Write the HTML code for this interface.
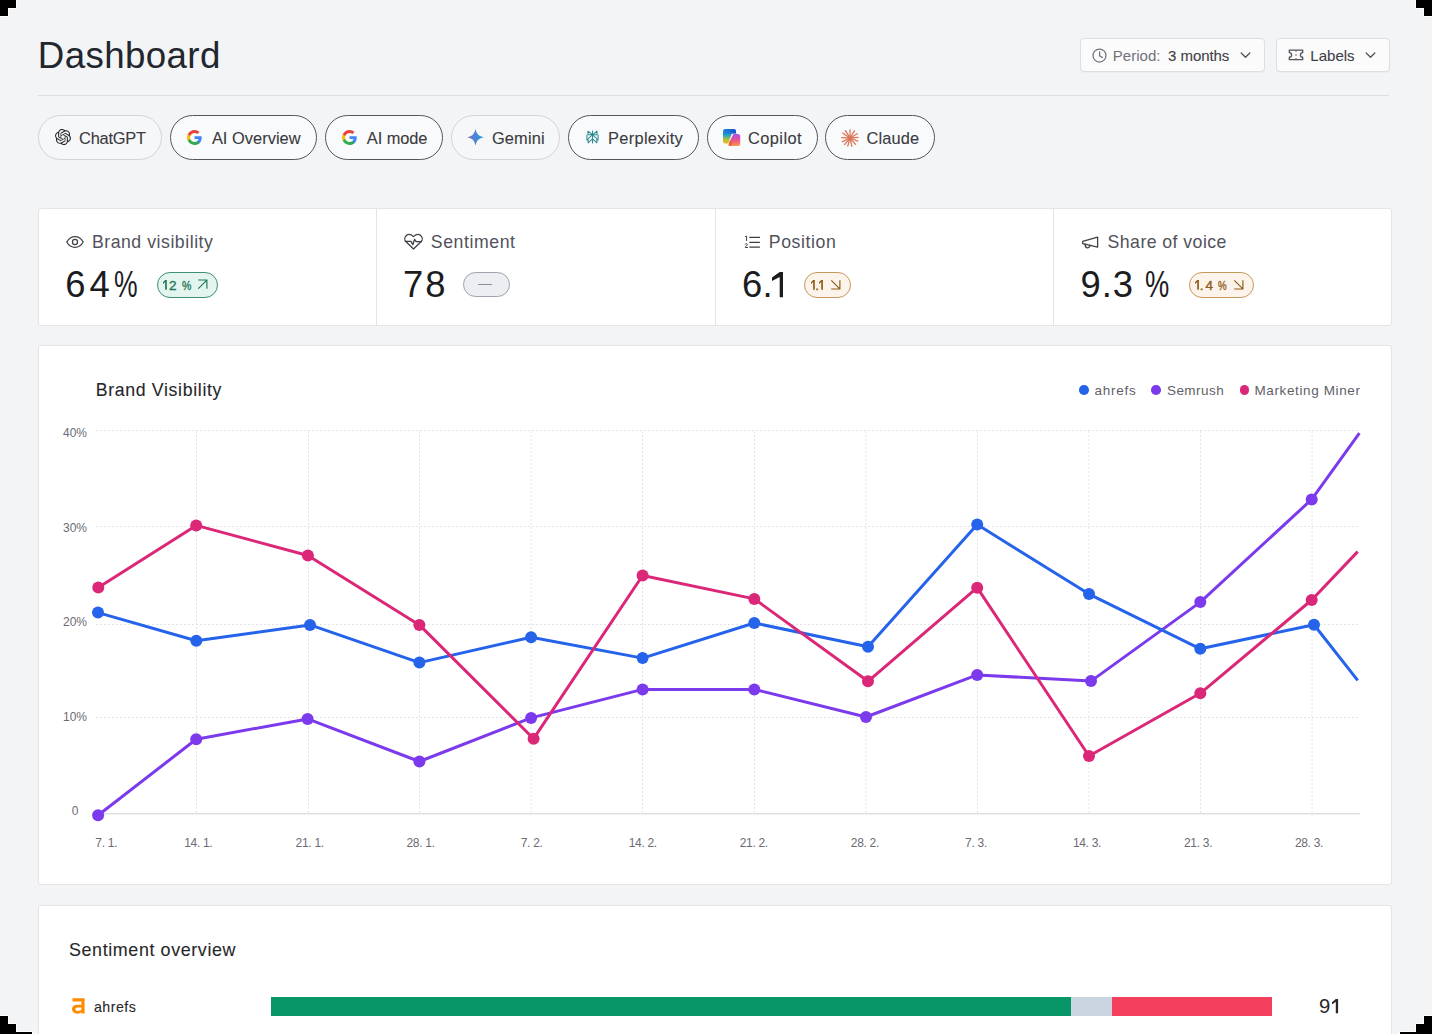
<!DOCTYPE html>
<html><head><meta charset="utf-8">
<style>
*{box-sizing:border-box;margin:0;padding:0}
html,body{width:1432px;height:1034px;overflow:hidden;background:#f3f4f6;font-family:"Liberation Sans",sans-serif;color:#27272a}
.abs{position:absolute}
.t{position:absolute;white-space:nowrap;line-height:1}
.med{-webkit-text-stroke:0.1px currentColor}
.bdg{-webkit-text-stroke:0.35px currentColor}
.corner{position:absolute;background:#000}
.card{position:absolute;background:#fff;border:1px solid #e4e4e7;border-radius:4px}
.chip{position:absolute;top:115px;height:44.5px;border-radius:23px;border:1px solid #d4d4d8;background:#f6f7f8}
.chip.sel{border:1.5px solid #55555c;background:#f9fafb}
.btn{position:absolute;top:38px;height:34px;background:#fbfbfc;border:1px solid #dddee2;border-radius:4px;box-shadow:0 1px 1px rgba(0,0,0,0.03)}
</style></head>
<body>
<div class="t" style="left:37.8px;top:37.8px;font-size:36.7px;letter-spacing:0.38px;color:#22262d">Dashboard</div>
<div class="abs" style="left:38px;top:95px;width:1351px;height:1px;background:#dcdee2"></div>

<div class="btn" style="left:1080px;width:184.5px"></div>
<svg class="abs" style="left:1092px;top:47.5px" width="15" height="15" viewBox="0 0 15 15"><circle cx="7.5" cy="7.5" r="6.5" fill="none" stroke="#71717a" stroke-width="1.25"/><path d="M7.6 3.9V7.9l2.9 1.6" fill="none" stroke="#71717a" stroke-width="1.25" stroke-linecap="round" stroke-linejoin="round"/></svg>
<div class="t" style="left:1112.8px;top:47.9px;font-size:15px;letter-spacing:0.03px;color:#71717a">Period:</div>
<div class="t med" style="left:1168.1px;top:47.9px;font-size:15px;letter-spacing:-0.06px;color:#3f3f46">3 months</div>
<svg class="abs" style="left:1239px;top:50px" width="13" height="10" viewBox="0 0 13 10"><path d="M2.2 3l4.3 4.3L10.8 3" fill="none" stroke="#52525b" stroke-width="1.3" stroke-linecap="round" stroke-linejoin="round"/></svg>

<div class="btn" style="left:1276px;width:113.5px"></div>
<svg class="abs" style="left:1287.5px;top:49px" width="16" height="12" viewBox="0 0 16 12"><path d="M1.3 1.2H14.7V3.6A2.3 2.3 0 0 0 14.7 8.2V10.7H1.3V8.2A2.3 2.3 0 0 0 1.3 3.6Z" fill="none" stroke="#52525b" stroke-width="1.3" stroke-linejoin="round"/><path d="M8 1.5v1.3M8 5.2v1.4M8 9.2v1.3" stroke="#52525b" stroke-width="1.2"/></svg>
<div class="t med" style="left:1310.3px;top:47.9px;font-size:15px;letter-spacing:0.02px;color:#3f3f46">Labels</div>
<svg class="abs" style="left:1364px;top:50px" width="13" height="10" viewBox="0 0 13 10"><path d="M2.2 3l4.3 4.3L10.8 3" fill="none" stroke="#52525b" stroke-width="1.3" stroke-linecap="round" stroke-linejoin="round"/></svg>

<div class="chip" style="left:38px;width:124px"></div>
<div class="chip sel" style="left:170px;width:147px"></div>
<div class="chip sel" style="left:325px;width:118px"></div>
<div class="chip" style="left:451px;width:108.5px"></div>
<div class="chip sel" style="left:567.5px;width:131.5px"></div>
<div class="chip sel" style="left:707px;width:110.5px"></div>
<div class="chip sel" style="left:825px;width:110px"></div>

<div class="t med" style="left:79.1px;top:129.8px;font-size:16.4px;letter-spacing:-0.25px;color:#3a3a40">ChatGPT</div>
<div class="t med" style="left:211.9px;top:129.8px;font-size:16.4px;letter-spacing:0.03px;color:#3a3a40">AI Overview</div>
<div class="t med" style="left:366.8px;top:129.8px;font-size:16.4px;letter-spacing:-0.07px;color:#3a3a40">AI mode</div>
<div class="t med" style="left:492px;top:129.8px;font-size:16.4px;letter-spacing:0.12px;color:#3a3a40">Gemini</div>
<div class="t med" style="left:608.1px;top:129.8px;font-size:16.4px;letter-spacing:0.29px;color:#3a3a40">Perplexity</div>
<div class="t med" style="left:748px;top:129.8px;font-size:16.4px;letter-spacing:0.42px;color:#3a3a40">Copilot</div>
<div class="t med" style="left:866.4px;top:129.8px;font-size:16.4px;letter-spacing:0.18px;color:#3a3a40">Claude</div>

<!-- ChatGPT logo -->
<svg class="abs" style="left:54.5px;top:129px" width="16" height="16" viewBox="0 0 24 24"><path fill="#27272a" d="M22.2819 9.8211a5.9847 5.9847 0 0 0-.5157-4.9108 6.0462 6.0462 0 0 0-6.5098-2.9A6.0651 6.0651 0 0 0 4.9807 4.1818a5.9847 5.9847 0 0 0-3.9977 2.9 6.0462 6.0462 0 0 0 .7427 7.0966 5.98 5.98 0 0 0 .511 4.9107 6.051 6.051 0 0 0 6.5146 2.9001A5.9847 5.9847 0 0 0 13.2599 24a6.0557 6.0557 0 0 0 5.7718-4.2058 5.9894 5.9894 0 0 0 3.9977-2.9001 6.0557 6.0557 0 0 0-.7475-7.0729zm-9.022 12.6081a4.4755 4.4755 0 0 1-2.8764-1.0408l.1419-.0804 4.7783-2.7582a.7948.7948 0 0 0 .3927-.6813v-6.7369l2.02 1.1686a.071.071 0 0 1 .038.052v5.5826a4.504 4.504 0 0 1-4.4945 4.4944zm-9.6607-4.1254a4.4708 4.4708 0 0 1-.5346-3.0137l.142.0852 4.783 2.7582a.7712.7712 0 0 0 .7806 0l5.8428-3.3685v2.3324a.0804.0804 0 0 1-.0332.0615L9.74 19.9502a4.4992 4.4992 0 0 1-6.1408-1.6464zM2.3408 7.8956a4.485 4.485 0 0 1 2.3655-1.9728V11.6a.7664.7664 0 0 0 .3879.6765l5.8144 3.3543-2.0201 1.1685a.0757.0757 0 0 1-.071 0l-4.8303-2.7865A4.504 4.504 0 0 1 2.3408 7.872zm16.5963 3.8558L13.1038 8.364 15.1192 7.2a.0757.0757 0 0 1 .071 0l4.8303 2.7913a4.4944 4.4944 0 0 1-.6765 8.1042v-5.6772a.79.79 0 0 0-.407-.667zm2.0107-3.0231l-.142-.0852-4.7735-2.7818a.7759.7759 0 0 0-.7854 0L9.409 9.2297V6.8974a.0662.0662 0 0 1 .0284-.0615l4.8303-2.7866a4.4992 4.4992 0 0 1 6.6802 4.66zM8.3065 12.863l-2.02-1.1638a.0804.0804 0 0 1-.038-.0567V6.0742a4.4992 4.4992 0 0 1 7.3757-3.4537l-.142.0805L8.704 5.459a.7948.7948 0 0 0-.3927.6813zm1.0976-2.3654l2.602-1.4998 2.6069 1.4998v2.9994l-2.5974 1.4997-2.6067-1.4997Z"/></svg>

<!-- Google G x2 -->
<svg class="abs" style="left:186.7px;top:129.6px" width="15" height="15" viewBox="1 1 22 22"><path fill="#4285F4" d="M22.56 12.25c0-.78-.07-1.53-.2-2.25H12v4.26h5.92c-.26 1.37-1.04 2.53-2.21 3.31v2.77h3.57c2.08-1.92 3.28-4.74 3.28-8.09z"/><path fill="#34A853" d="M12 23c2.97 0 5.46-.98 7.28-2.66l-3.57-2.77c-.98.66-2.23 1.06-3.71 1.06-2.86 0-5.290-1.93-6.160-4.53H2.18v2.84C3.99 20.53 7.7 23 12 23z"/><path fill="#FBBC05" d="M5.84 14.09c-.22-.66-.35-1.36-.35-2.09s.13-1.43.35-2.09V7.07H2.18C1.43 8.55 1 10.22 1 12s.43 3.45 1.18 4.93l2.85-2.22.81-.62z"/><path fill="#EA4335" d="M12 5.38c1.62 0 3.06.56 4.21 1.64l3.15-3.15C17.45 2.09 14.97 1 12 1 7.7 1 3.99 3.47 2.18 7.07l3.66 2.84c.87-2.6 3.3-4.53 6.16-4.53z"/></svg>
<svg class="abs" style="left:341.7px;top:129.6px" width="15" height="15" viewBox="1 1 22 22"><path fill="#4285F4" d="M22.56 12.25c0-.78-.07-1.53-.2-2.25H12v4.26h5.920c-.26 1.37-1.04 2.53-2.21 3.31v2.77h3.57c2.08-1.92 3.28-4.74 3.28-8.09z"/><path fill="#34A853" d="M12 23c2.97 0 5.46-.98 7.28-2.66l-3.57-2.77c-.98.66-2.23 1.06-3.71 1.06-2.86 0-5.29-1.93-6.16-4.53H2.18v2.84C3.99 20.53 7.7 23 12 23z"/><path fill="#FBBC05" d="M5.84 14.09c-.22-.66-.35-1.36-.35-2.09s.13-1.43.35-2.09V7.07H2.18C1.43 8.55 1 10.22 1 12s.43 3.45 1.18 4.93l2.85-2.22.81-.62z"/><path fill="#EA4335" d="M12 5.38c1.62 0 3.06.56 4.21 1.64l3.15-3.15C17.45 2.09 14.97 1 12 1 7.7 1 3.99 3.47 2.18 7.07l3.66 2.84c.87-2.6 3.3-4.53 6.16-4.53z"/></svg>

<!-- Gemini star -->
<svg class="abs" style="left:466.5px;top:129px" width="17" height="16.5" viewBox="0 0 24 24"><defs><linearGradient id="gm" x1="0" y1="0.5" x2="1" y2="0.5"><stop offset="0" stop-color="#8a64c4"/><stop offset="0.5" stop-color="#4a86d6"/><stop offset="1" stop-color="#1a9be0"/></linearGradient></defs><path fill="url(#gm)" d="M12 24A14.304 14.304 0 0 0 0 12 14.304 14.304 0 0 0 12 0a14.305 14.305 0 0 0 12 12 14.305 14.305 0 0 0-12 12"/></svg>

<!-- Perplexity -->
<svg class="abs" style="left:585.5px;top:130px" width="13" height="14" viewBox="0 0 13 14"><g fill="none" stroke="#2a8a8f" stroke-width="1.05" stroke-linejoin="round"><path d="M2 1.2l4.5 3.7 4.5-3.7v3.6H2z"/><path d="M6.5 0.6v12.8"/><path d="M0.9 4.8v5.2H2.1M12.1 4.8v5.2H10.9"/><path d="M6.5 4.9L2.1 8.6v4.2l4.4-3.9 4.4 3.9V8.6z"/></g></svg>

<!-- Copilot -->
<svg class="abs" style="left:718px;top:124px" width="28" height="28" viewBox="0 0 28 28"><defs>
<linearGradient id="cp1" x1="0" y1="0" x2="0" y2="1"><stop offset="0" stop-color="#1a78e0"/><stop offset="0.4" stop-color="#1c9fcf"/><stop offset="0.75" stop-color="#b6c52c"/><stop offset="1" stop-color="#e8b81c"/></linearGradient>
<linearGradient id="cp2" x1="0" y1="0" x2="0" y2="1"><stop offset="0" stop-color="#b050e6"/><stop offset="0.45" stop-color="#e2509c"/><stop offset="0.8" stop-color="#f57a62"/><stop offset="1" stop-color="#fb9a4c"/></linearGradient>
<linearGradient id="cp3" x1="0" y1="0" x2="1" y2="0"><stop offset="0" stop-color="#1e8ee0"/><stop offset="1" stop-color="#1646c8"/></linearGradient></defs>
<path fill="url(#cp1)" d="M7.6 5H15.6C17 5 17.7 5.8 17.9 7L18.2 9.6H13.8L10.6 18.4C10.3 19.2 9.7 19.5 8.9 19.5H7.2C5.9 19.5 5 18.6 5 17.3V7.6C5 6.1 6.1 5 7.6 5Z"/>
<path fill="url(#cp3)" opacity="0.9" d="M7.6 5H15.6C17 5 17.7 5.8 17.9 7L18.2 9.6H7.2C5.9 9.6 5 8.7 5 7.6C5 6.1 6.1 5 7.6 5Z"/>
<path fill="url(#cp2)" d="M15.3 9.9H20C21.3 9.9 22.2 10.9 22.2 12.2V19.7C22.2 21 21.2 22 19.9 22H12.2C11 22 10.3 21.2 10.6 20.2L11.2 18.6Z"/>
<path fill="#e55a2c" opacity="0.75" d="M10.6 20.2L11.8 17H14.5L13.4 22H12.2C11 22 10.3 21.2 10.6 20.2Z"/>
</svg>

<!-- Claude -->
<svg class="abs" style="left:840.5px;top:128.5px" width="18" height="18" viewBox="-9 -9 18 18"><g stroke="#d97757" stroke-width="1.3" stroke-linecap="round">
<path d="M0 0L0 -8.2"/><path d="M0 0L4.4 -7.2"/><path d="M0 0L7.3 -4.3"/><path d="M0 0L8.2 -0.6"/><path d="M0 0L7.8 3.2"/><path d="M0 0L5.6 6.4"/><path d="M0 0L1.8 8.2"/><path d="M0 0L-2.2 8.2"/><path d="M0 0L-5.4 6.6"/><path d="M0 0L-7.6 3.6"/><path d="M0 0L-8.3 -0.3"/><path d="M0 0L-7.2 -4.8"/><path d="M0 0L-4.6 -7.4"/>
</g><circle r="2.2" fill="#d97757"/></svg>

<div class="card" style="left:38px;top:208px;width:1353.5px;height:117.5px;border-radius:3px"></div>
<div class="abs" style="left:375.5px;top:209px;width:1px;height:115.5px;background:#e4e4e7"></div>
<div class="abs" style="left:715px;top:209px;width:1px;height:115.5px;background:#e4e4e7"></div>
<div class="abs" style="left:1053px;top:209px;width:1px;height:115.5px;background:#e4e4e7"></div>

<!-- icons -->
<svg class="abs" style="left:65px;top:234px" width="20" height="16" viewBox="0 0 20 16"><path d="M1.8 8C3.8 4.4 6.6 2.6 10 2.6S16.2 4.4 18.2 8C16.2 11.6 13.4 13.4 10 13.4S3.8 11.6 1.8 8Z" fill="none" stroke="#3f3f46" stroke-width="1.25" stroke-linejoin="round"/><circle cx="10" cy="8" r="2.55" fill="none" stroke="#3f3f46" stroke-width="1.25"/></svg>
<svg class="abs" style="left:403px;top:232px" width="21" height="19" viewBox="0 0 21 19"><path d="M2.6 9.3C1.3 7.6 1.6 4.9 3.4 3.4 5.3 1.9 8 2.2 10.5 4.6 13 2.2 15.7 1.9 17.6 3.4 19.4 4.9 19.7 7.6 18.4 9.3L10.5 17 2.6 9.3Z" fill="none" stroke="#3f3f46" stroke-width="1.3" stroke-linejoin="round"/><path d="M2.4 9.4H8L9.8 12.8 11.6 7.3 13.2 9.6H18.6" fill="none" stroke="#3f3f46" stroke-width="1.3" stroke-linejoin="round" stroke-linecap="round"/></svg>
<svg class="abs" style="left:743px;top:234px" width="19" height="16" viewBox="0 0 19 16"><path d="M6.8 3.4H16.5M6.8 8.3H16.5M6.8 13.1H16.5" stroke="#3f3f46" stroke-width="1.2" stroke-linecap="round"/><path d="M2.4 2.6l1.2-.5V6.6M2.2 10.1c.3-.6 1.7-.8 2.1 0 .4.8-1.5 2-2 3.4h2.2" fill="none" stroke="#3f3f46" stroke-width="1" stroke-linecap="round" stroke-linejoin="round"/></svg>
<svg class="abs" style="left:1080px;top:235px" width="20" height="15" viewBox="0 0 20 15"><path d="M2.7 6.4L17.6 2.1V12.2L2.7 8.7Z" fill="none" stroke="#3f3f46" stroke-width="1.3" stroke-linejoin="round"/><path d="M5.2 9.2C4.6 13.6 9.6 14.2 9.9 10.2" fill="none" stroke="#3f3f46" stroke-width="1.3" stroke-linecap="round"/></svg>

<!-- labels -->
<div class="t" style="left:91.9px;top:234.1px;font-size:17.7px;letter-spacing:0.53px;color:#52525b">Brand visibility</div>
<div class="t" style="left:430.8px;top:234.1px;font-size:17.7px;letter-spacing:0.57px;color:#52525b">Sentiment</div>
<div class="t" style="left:768.8px;top:234.1px;font-size:17.7px;letter-spacing:0.59px;color:#52525b">Position</div>
<div class="t" style="left:1107.6px;top:234.1px;font-size:17.7px;letter-spacing:0.44px;color:#52525b">Share of voice</div>

<!-- values -->
<div class="t" style="left:65.2px;top:267.4px;font-size:36.4px;letter-spacing:4px;color:#1c1c1f">64</div>
<div class="t" style="left:113.5px;top:267.4px;font-size:36.4px;color:#1c1c1f;transform:scaleX(0.73);transform-origin:0 0">%</div>
<div class="t" style="left:403px;top:267.4px;font-size:36.4px;letter-spacing:2px;color:#1c1c1f">78</div>
<div class="t" style="left:742px;top:267.4px;font-size:36.4px;color:#1c1c1f">6</div>
<div class="t" style="left:762.6px;top:267.4px;font-size:36.4px;color:#1c1c1f">.</div>
<svg class="abs" style="left:770.90px;top:271.30px" width="13.00" height="27.20" viewBox="0 0 13.00 27.20"><path fill="#1c1c1f" d="M1.00 6.54L8.70 1.00H12.00V26.20H8.70V6.04L1.00 10.01Z"/></svg>
<div class="t" style="left:1080.6px;top:267.4px;font-size:36.4px;letter-spacing:0.9px;color:#1c1c1f">9.3</div>
<div class="t" style="left:1145.4px;top:267.4px;font-size:36.4px;color:#1c1c1f;transform:scaleX(0.75);transform-origin:0 0">%</div>

<!-- badges -->
<div class="abs" style="left:156.5px;top:272px;width:61px;height:25.5px;border-radius:13px;border:1.2px solid #3f8f72;background:#e3f5ee"></div>
<svg class="abs" style="left:162.20px;top:278.90px" width="5.80" height="11.80" viewBox="0 0 5.80 11.80"><path fill="#1d7655" d="M1.00 3.16L3.15 1.00H4.80V10.80H3.15V2.96L1.00 4.89Z"/></svg>
<div class="t bdg" style="left:169px;top:279px;font-size:13.5px;color:#1d7655">2</div>
<div class="t bdg" style="left:181.5px;top:279px;font-size:13.5px;color:#1d7655;transform:scaleX(0.78);transform-origin:0 0">%</div>
<svg class="abs" style="left:195.5px;top:278px" width="13" height="13" viewBox="0 0 13 13"><path d="M2.3 10.6L10.6 2.3M2.2 2H10.9V10.7" fill="none" stroke="#1d7655" stroke-width="1.15"/></svg>

<div class="abs" style="left:463px;top:272px;width:46.5px;height:25.2px;border-radius:13px;border:1.2px solid #9ea3ae;background:#eceef2"></div>
<div class="abs" style="left:478px;top:284px;width:14px;height:1.4px;background:#8b8f98"></div>

<div class="abs" style="left:804px;top:272px;width:46.5px;height:25.5px;border-radius:13px;border:1.2px solid #c59a5c;background:#fcf4ea"></div>
<svg class="abs" style="left:809.80px;top:278.90px" width="5.80" height="11.80" viewBox="0 0 5.80 11.80"><path fill="#8c5a17" d="M1.00 3.16L3.15 1.00H4.80V10.80H3.15V2.96L1.00 4.89Z"/></svg>
<div class="t bdg" style="left:815.2px;top:279px;font-size:13.5px;color:#8c5a17">.</div>
<svg class="abs" style="left:818.30px;top:278.90px" width="5.90" height="11.80" viewBox="0 0 5.90 11.80"><path fill="#8c5a17" d="M1.00 3.16L3.25 1.00H4.90V10.80H3.25V2.96L1.00 4.89Z"/></svg>
<svg class="abs" style="left:828.5px;top:278px" width="13" height="13" viewBox="0 0 13 13"><path d="M2.3 2.3L10.6 10.6M2.2 11H10.9V2.3" fill="none" stroke="#8c5a17" stroke-width="1.15"/></svg>

<div class="abs" style="left:1189px;top:272px;width:64.5px;height:25.5px;border-radius:13px;border:1.2px solid #c59a5c;background:#fcf4ea"></div>
<svg class="abs" style="left:1194.30px;top:278.90px" width="5.90" height="11.80" viewBox="0 0 5.90 11.80"><path fill="#8c5a17" d="M1.00 3.16L3.25 1.00H4.90V10.80H3.25V2.96L1.00 4.89Z"/></svg>
<div class="t bdg" style="left:1199.8px;top:279px;font-size:13.5px;letter-spacing:1.9px;color:#8c5a17">.4</div>
<div class="t bdg" style="left:1218.2px;top:279px;font-size:13.5px;color:#8c5a17;transform:scaleX(0.72);transform-origin:0 0">%</div>
<svg class="abs" style="left:1232px;top:278px" width="13" height="13" viewBox="0 0 13 13"><path d="M2.3 2.3L10.6 10.6M2.2 11H10.9V2.3" fill="none" stroke="#8c5a17" stroke-width="1.15"/></svg>

<div class="card" style="left:38px;top:345px;width:1353.5px;height:539.5px;border-radius:3px"></div>
<svg class="abs" style="left:0;top:0" width="1432" height="1034" viewBox="0 0 1432 1034">
<path d="M96 430.5H1358 M96 526.5H1358 M96 624.5H1358 M96 717.5H1358 M196.5 431V813 M308.5 431V813 M419.5 431V813 M531 431V813 M642.5 431V813 M754.5 431V813 M866 431V813 M977.5 431V813 M1089 431V813 M1200.5 431V813 M1312 431V813" fill="none" stroke="#e3e4e6" stroke-width="1" stroke-dasharray="2 2"/>
<path d="M96 813.7H1360" stroke="#dfe0e3" stroke-width="1.4"/>
<path d="M98.1 815.2 L196.2 739.3 L307.6 718.9 L419.4 761.5 L531.1 717.9 L642.6 689.4 L754.3 689.4 L866 717 L977.2 674.9 L1091 681.1 L1200.3 602.1 L1311.7 499.4 L1359.4 433.2" fill="none" stroke="#7c3aed" stroke-width="3" stroke-linejoin="round"/>
<path d="M98 612.6 L196.3 640.8 L310 624.9 L419.4 662.6 L531.1 637.2 L642.6 658.1 L754.3 623 L868 646.8 L977.2 524.5 L1089 594.1 L1200.3 648.8 L1314 624.7 L1357.7 680.4" fill="none" stroke="#2563eb" stroke-width="3" stroke-linejoin="round"/>
<path d="M98.3 587.6 L196.2 525.4 L307.9 555.5 L419.4 624.9 L533.6 738.7 L642.6 575.5 L754.3 598.9 L868 681.3 L977.2 587.7 L1089 756 L1200.3 693.3 L1311.7 600 L1357.7 551.6" fill="none" stroke="#db2777" stroke-width="3" stroke-linejoin="round"/>
<circle cx="98.1" cy="815.2" r="6" fill="#7c3aed"/>
<circle cx="196.2" cy="739.3" r="6" fill="#7c3aed"/>
<circle cx="307.6" cy="718.9" r="6" fill="#7c3aed"/>
<circle cx="419.4" cy="761.5" r="6" fill="#7c3aed"/>
<circle cx="531.1" cy="717.9" r="6" fill="#7c3aed"/>
<circle cx="642.6" cy="689.4" r="6" fill="#7c3aed"/>
<circle cx="754.3" cy="689.4" r="6" fill="#7c3aed"/>
<circle cx="866" cy="717" r="6" fill="#7c3aed"/>
<circle cx="977.2" cy="674.9" r="6" fill="#7c3aed"/>
<circle cx="1091" cy="681.1" r="6" fill="#7c3aed"/>
<circle cx="1200.3" cy="602.1" r="6" fill="#7c3aed"/>
<circle cx="1311.7" cy="499.4" r="6" fill="#7c3aed"/>
<circle cx="98" cy="612.6" r="6" fill="#2563eb"/>
<circle cx="196.3" cy="640.8" r="6" fill="#2563eb"/>
<circle cx="310" cy="624.9" r="6" fill="#2563eb"/>
<circle cx="419.4" cy="662.6" r="6" fill="#2563eb"/>
<circle cx="531.1" cy="637.2" r="6" fill="#2563eb"/>
<circle cx="642.6" cy="658.1" r="6" fill="#2563eb"/>
<circle cx="754.3" cy="623" r="6" fill="#2563eb"/>
<circle cx="868" cy="646.8" r="6" fill="#2563eb"/>
<circle cx="977.2" cy="524.5" r="6" fill="#2563eb"/>
<circle cx="1089" cy="594.1" r="6" fill="#2563eb"/>
<circle cx="1200.3" cy="648.8" r="6" fill="#2563eb"/>
<circle cx="1314" cy="624.7" r="6" fill="#2563eb"/>
<circle cx="98.3" cy="587.6" r="6" fill="#db2777"/>
<circle cx="196.2" cy="525.4" r="6" fill="#db2777"/>
<circle cx="307.9" cy="555.5" r="6" fill="#db2777"/>
<circle cx="419.4" cy="624.9" r="6" fill="#db2777"/>
<circle cx="533.6" cy="738.7" r="6" fill="#db2777"/>
<circle cx="642.6" cy="575.5" r="6" fill="#db2777"/>
<circle cx="754.3" cy="598.9" r="6" fill="#db2777"/>
<circle cx="868" cy="681.3" r="6" fill="#db2777"/>
<circle cx="977.2" cy="587.7" r="6" fill="#db2777"/>
<circle cx="1089" cy="756" r="6" fill="#db2777"/>
<circle cx="1200.3" cy="693.3" r="6" fill="#db2777"/>
<circle cx="1311.7" cy="600" r="6" fill="#db2777"/>
</svg>
<div class="t med" style="left:95.7px;top:381.8px;font-size:17.7px;letter-spacing:0.67px;color:#27272a">Brand Visibility</div>
<div class="abs" style="left:1079.3px;top:385.4px;width:9.6px;height:9.6px;border-radius:50%;background:#2563eb"></div>
<div class="abs" style="left:1151.3px;top:385.4px;width:9.6px;height:9.6px;border-radius:50%;background:#7c3aed"></div>
<div class="abs" style="left:1239.5px;top:385.4px;width:9.6px;height:9.6px;border-radius:50%;background:#db2777"></div>
<div class="t" style="left:1094.6px;top:384px;font-size:13.5px;letter-spacing:0.72px;color:#5f5f67">ahrefs</div>
<div class="t" style="left:1166.9px;top:384px;font-size:13.5px;letter-spacing:0.48px;color:#5f5f67">Semrush</div>
<div class="t" style="left:1254.4px;top:384px;font-size:13.5px;letter-spacing:0.63px;color:#5f5f67">Marketing Miner</div>
<div class="t" style="left:45px;width:60px;text-align:center;top:427.4px;font-size:12px;color:#6b6b73">40%</div>
<div class="t" style="left:45px;width:60px;text-align:center;top:521.9px;font-size:12px;color:#6b6b73">30%</div>
<div class="t" style="left:45px;width:60px;text-align:center;top:616.4px;font-size:12px;color:#6b6b73">20%</div>
<div class="t" style="left:45px;width:60px;text-align:center;top:710.9px;font-size:12px;color:#6b6b73">10%</div>
<div class="t" style="left:45px;width:60px;text-align:center;top:805.4px;font-size:12px;color:#6b6b73">0</div>
<div class="t" style="left:56.3px;width:100px;text-align:center;top:836.6px;font-size:12px;letter-spacing:-0.3px;color:#6b6b73">7. 1.</div>
<div class="t" style="left:148.3px;width:100px;text-align:center;top:836.6px;font-size:12px;letter-spacing:-0.3px;color:#6b6b73">14. 1.</div>
<div class="t" style="left:259.7px;width:100px;text-align:center;top:836.6px;font-size:12px;letter-spacing:-0.3px;color:#6b6b73">21. 1.</div>
<div class="t" style="left:370.6px;width:100px;text-align:center;top:836.6px;font-size:12px;letter-spacing:-0.3px;color:#6b6b73">28. 1.</div>
<div class="t" style="left:481.7px;width:100px;text-align:center;top:836.6px;font-size:12px;letter-spacing:-0.3px;color:#6b6b73">7. 2.</div>
<div class="t" style="left:592.8px;width:100px;text-align:center;top:836.6px;font-size:12px;letter-spacing:-0.3px;color:#6b6b73">14. 2.</div>
<div class="t" style="left:703.8px;width:100px;text-align:center;top:836.6px;font-size:12px;letter-spacing:-0.3px;color:#6b6b73">21. 2.</div>
<div class="t" style="left:814.9px;width:100px;text-align:center;top:836.6px;font-size:12px;letter-spacing:-0.3px;color:#6b6b73">28. 2.</div>
<div class="t" style="left:926.0px;width:100px;text-align:center;top:836.6px;font-size:12px;letter-spacing:-0.3px;color:#6b6b73">7. 3.</div>
<div class="t" style="left:1037.0px;width:100px;text-align:center;top:836.6px;font-size:12px;letter-spacing:-0.3px;color:#6b6b73">14. 3.</div>
<div class="t" style="left:1148.1px;width:100px;text-align:center;top:836.6px;font-size:12px;letter-spacing:-0.3px;color:#6b6b73">21. 3.</div>
<div class="t" style="left:1259.0px;width:100px;text-align:center;top:836.6px;font-size:12px;letter-spacing:-0.3px;color:#6b6b73">28. 3.</div>
<div class="card" style="left:38px;top:904.5px;width:1353.5px;height:200px;border-radius:3px"></div>
<div class="t med" style="left:69px;top:941.6px;font-size:17.9px;letter-spacing:0.61px;color:#27272a">Sentiment overview</div>
<svg class="abs" style="left:71px;top:996.5px" width="15.6" height="17.3" viewBox="0 0 15 17"><path fill="#ff8b00" d="M1.3 1.2H13.2V16.2H10.1V15.1C9.3 15.9 8.1 16.4 6.2 16.4 2.7 16.4 0.8 14.6 0.8 11.9 0.8 8.9 3.2 7.5 6.4 7.5H10.1V4.4H1.3Z M10.1 10.3H6.7C5.1 10.3 4.2 10.9 4.2 12 4.2 13.1 5 13.7 6.6 13.7 8.6 13.7 10.1 13 10.1 11.8Z"/></svg>
<div class="t med" style="left:94px;top:999.8px;font-size:14.2px;letter-spacing:0.48px;color:#27272a">ahrefs</div>
<div class="abs" style="left:271px;top:996.6px;width:799.5px;height:19px;background:#069668"></div>
<div class="abs" style="left:1070.5px;top:996.6px;width:41px;height:19px;background:#cbd5e1"></div>
<div class="abs" style="left:1111.5px;top:996.6px;width:160.5px;height:19px;background:#f43f5e"></div>
<div class="t" style="left:1319px;top:996px;font-size:20.3px;color:#27272a">9</div>
<svg class="abs" style="left:1331.00px;top:997.80px" width="8.10" height="16.30" viewBox="0 0 8.10 16.30"><path fill="#27272a" d="M1.00 4.15L4.80 1.00H7.10V15.30H4.80V3.86L1.00 6.56Z"/></svg>

<div class="abs" style="left:0;top:0;width:17px;height:9px;background:#fff"></div>
<div class="abs" style="left:0;top:0;width:9px;height:17px;background:#fff"></div>
<div class="abs" style="right:0;top:0;width:17px;height:9px;background:#fff"></div>
<div class="abs" style="right:0;top:0;width:9px;height:17px;background:#fff"></div>
<div class="abs" style="left:0;top:1015px;width:9px;height:19px;background:#fff"></div>
<div class="abs" style="left:0;top:1023px;width:17px;height:11px;background:#fff"></div>
<div class="abs" style="left:0;top:1031px;width:33px;height:3px;background:#fff"></div>
<div class="abs" style="right:0;top:1015px;width:9px;height:19px;background:#fff"></div>
<div class="abs" style="right:0;top:1023px;width:17px;height:11px;background:#fff"></div>
<div class="abs" style="right:0;top:1031px;width:33px;height:3px;background:#fff"></div>
<div class="corner" style="left:0;top:0;width:16px;height:8px"></div>
<div class="corner" style="left:0;top:8px;width:8px;height:8px"></div>
<div class="corner" style="right:0;top:0;width:16px;height:8px"></div>
<div class="corner" style="right:0;top:8px;width:8px;height:8px"></div>
<div class="corner" style="left:0;top:1016px;width:8px;height:18px"></div>
<div class="corner" style="left:0;top:1024px;width:16px;height:10px"></div>
<div class="corner" style="left:0;top:1032px;width:32px;height:2px"></div>
<div class="corner" style="right:0;top:1016px;width:8px;height:18px"></div>
<div class="corner" style="right:0;top:1024px;width:16px;height:10px"></div>
<div class="corner" style="right:0;top:1032px;width:32px;height:2px"></div>

</body></html>
